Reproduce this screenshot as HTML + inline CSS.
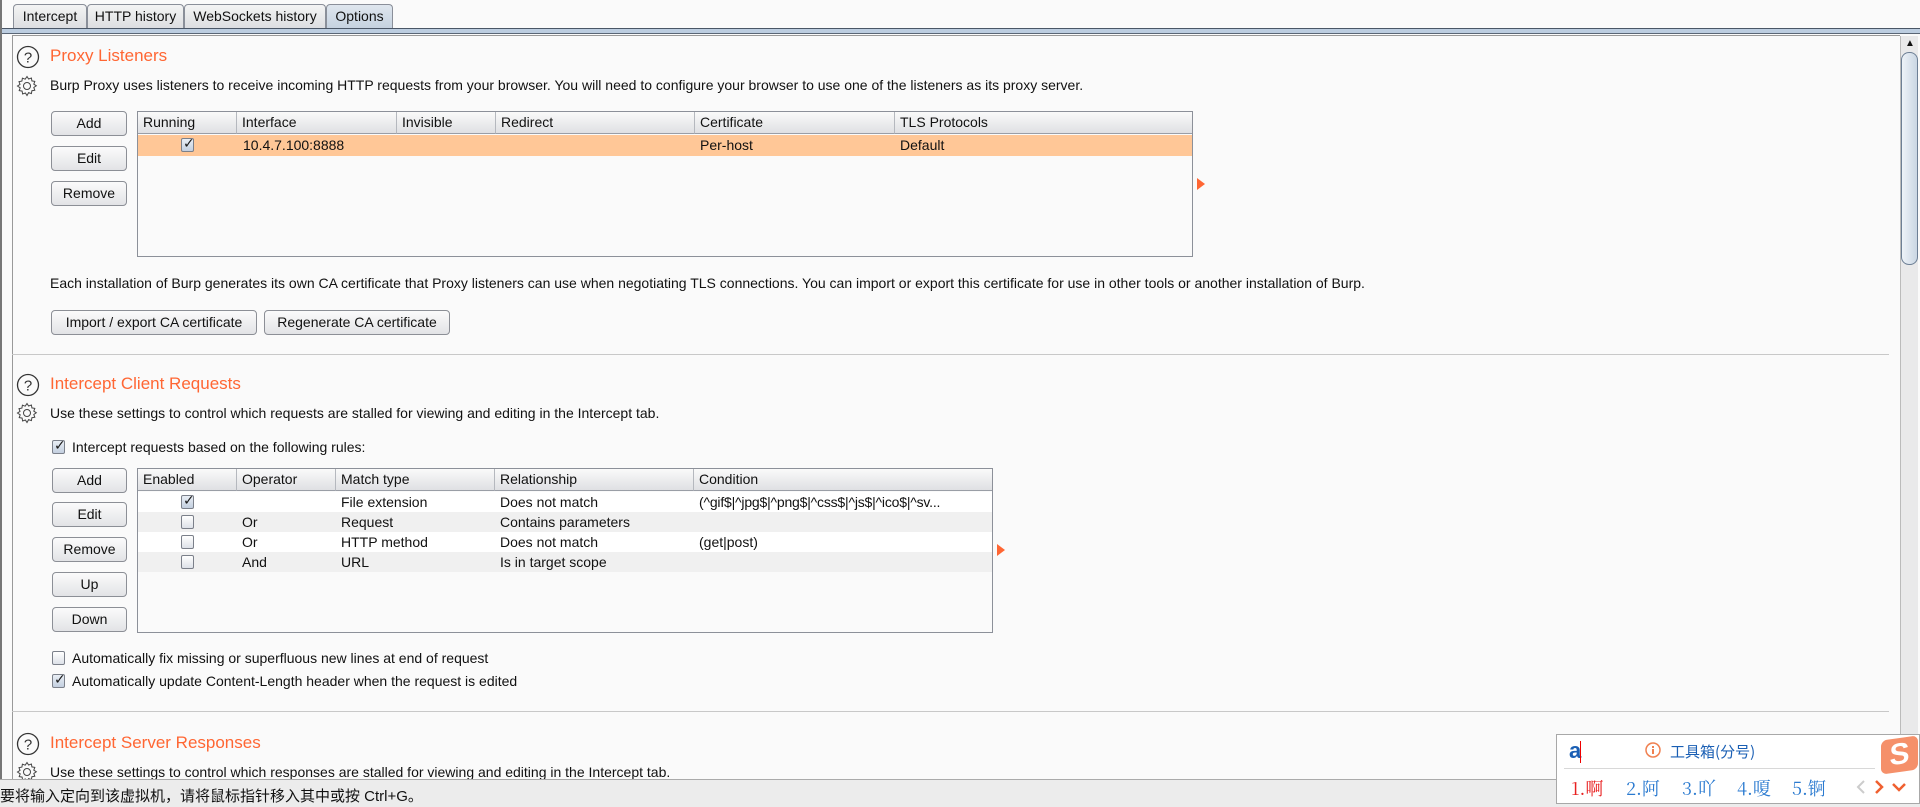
<!DOCTYPE html>
<html><head><meta charset="utf-8"><style>
*{margin:0;padding:0;box-sizing:border-box}
body{width:1920px;height:807px;overflow:hidden;background:#fafafa;font-family:"Liberation Sans","DejaVu Sans","Noto Sans CJK SC",sans-serif;font-size:14px;color:#111;position:relative}
.a{position:absolute;white-space:nowrap}
.tab{position:absolute;top:4px;height:25px;border:1px solid #8a8f99;border-bottom:none;border-radius:4px 4px 0 0;background:linear-gradient(#f4f4f4,#dcdde0);line-height:23px;text-align:center;font-size:14px}
.btn{position:absolute;height:25px;border:1px solid #8c8f96;border-radius:4px;background:linear-gradient(#fbfbfb,#e2e3e6);text-align:center;line-height:23px;font-size:14px}
.h{position:absolute;color:#ff6633;font-size:17px}
.tbl{position:absolute;border:1px solid #8c9099;background:#fafafa}
.th{position:absolute;top:0;height:22px;border-right:1px solid #b5b8be;border-bottom:1px solid #9a9ea6;background:linear-gradient(#fafafa,#dfe0e3);line-height:21px;padding-left:5px}
.cb{position:absolute;width:13px;height:14px;border:1px solid #7b808a;border-radius:2px;background:linear-gradient(#fff,#dde1e8)}
.cb.on{background:linear-gradient(#e9eef5,#c3cfdf)}
.cb.on::after{content:"✓";position:absolute;left:1px;top:-4px;font-size:14px;font-weight:bold;color:#1a1a1a}
.sep{position:absolute;left:12px;width:1877px;height:1px;background:#c8c8c8}
</style></head><body>
<div class="a" style="left:0;top:0;width:2px;height:780px;background:#777"></div>
<div class="tab" style="left:13px;width:74px">Intercept</div>
<div class="tab" style="left:87px;width:97px">HTTP history</div>
<div class="tab" style="left:184px;width:142px">WebSockets history</div>
<div class="tab" style="left:326px;width:67px;background:linear-gradient(#dfe6ee,#c4d1df)">Options</div>
<div class="a" style="left:2px;top:28px;width:1918px;height:1px;background:#4a5666"></div>
<div class="a" style="left:2px;top:29px;width:1918px;height:4px;background:#bccde0"></div>
<div class="a" style="left:2px;top:33px;width:1918px;height:1px;background:#5a6675"></div>
<div class="a" style="left:12px;top:35px;width:1888px;height:745px;border-left:1px solid #999;border-top:1px solid #999;background:#fafafa"></div>
<!-- scrollbar -->
<div class="a" style="left:1900px;top:36px;width:18px;height:744px;background:#e9e9ea;border-left:1px solid #bbb"></div>
<div class="a" style="left:1905px;top:38px;font-size:10px">▲</div>
<div class="a" style="left:1901px;top:52px;width:17px;height:213px;border:1px solid #6d7f95;border-radius:8px;background:linear-gradient(90deg,#eef3f8,#cad6e3)"></div>

<svg class="a" style="left:16px;top:45px" width="24" height="24"><circle cx="12" cy="12" r="10.5" fill="none" stroke="#333" stroke-width="1.3"/><text x="12" y="17.5" text-anchor="middle" font-size="15" font-family="Liberation Sans" fill="#333">?</text></svg>
<div class="h" style="left:50px;top:46px">Proxy Listeners</div>
<svg class="a" style="left:16px;top:75px" width="22" height="22" viewBox="0 0 22 22"><path d="M11 1.5l1.6 2.5 2.8-1 .5 2.9 2.9.5-1 2.8 2.5 1.6-2.5 1.6 1 2.8-2.9.5-.5 2.9-2.8-1L11 20.5l-1.6-2.5-2.8 1-.5-2.9-2.9-.5 1-2.8L1.5 11l2.5-1.6-1-2.8 2.9-.5.5-2.9 2.8 1z" fill="none" stroke="#444" stroke-width="1"/><circle cx="11" cy="11" r="3.5" fill="none" stroke="#444"/></svg>
<div class="a" style="left:50px;top:77px">Burp Proxy uses listeners to receive incoming HTTP requests from your browser. You will need to configure your browser to use one of the listeners as its proxy server.</div>

<div class="btn" style="left:51px;top:111px;width:76px">Add</div>
<div class="btn" style="left:51px;top:146px;width:76px">Edit</div>
<div class="btn" style="left:51px;top:181px;width:76px">Remove</div>
<div class="tbl" style="left:137px;top:111px;width:1056px;height:146px">
<div class="th" style="left:0;width:99px">Running</div>
<div class="th" style="left:99px;width:160px">Interface</div>
<div class="th" style="left:259px;width:99px">Invisible</div>
<div class="th" style="left:358px;width:199px">Redirect</div>
<div class="th" style="left:557px;width:200px">Certificate</div>
<div class="th" style="left:757px;width:297px;border-right:none">TLS Protocols</div>
<div class="a" style="left:0;top:23px;width:1054px;height:21px;background:#ffc797"></div>
<div class="cb on" style="left:43px;top:26px"></div>
<div class="a" style="left:105px;top:25px">10.4.7.100:8888</div>
<div class="a" style="left:562px;top:25px">Per-host</div>
<div class="a" style="left:762px;top:25px">Default</div>
</div>
<svg class="a" style="left:1197px;top:178px" width="8" height="12"><path d="M0 0L8 6L0 12z" fill="#ff6633"/></svg>

<div class="a" style="left:50px;top:275px">Each installation of Burp generates its own CA certificate that Proxy listeners can use when negotiating TLS connections. You can import or export this certificate for use in other tools or another installation of Burp.</div>
<div class="btn" style="left:51px;top:310px;width:206px">Import / export CA certificate</div>
<div class="btn" style="left:264px;top:310px;width:186px">Regenerate CA certificate</div>
<div class="sep" style="top:354px"></div>

<svg class="a" style="left:16px;top:373px" width="24" height="24"><circle cx="12" cy="12" r="10.5" fill="none" stroke="#333" stroke-width="1.3"/><text x="12" y="17.5" text-anchor="middle" font-size="15" font-family="Liberation Sans" fill="#333">?</text></svg>
<div class="h" style="left:50px;top:374px">Intercept Client Requests</div>
<svg class="a" style="left:16px;top:402px" width="22" height="22" viewBox="0 0 22 22"><path d="M11 1.5l1.6 2.5 2.8-1 .5 2.9 2.9.5-1 2.8 2.5 1.6-2.5 1.6 1 2.8-2.9.5-.5 2.9-2.8-1L11 20.5l-1.6-2.5-2.8 1-.5-2.9-2.9-.5 1-2.8L1.5 11l2.5-1.6-1-2.8 2.9-.5.5-2.9 2.8 1z" fill="none" stroke="#444" stroke-width="1"/><circle cx="11" cy="11" r="3.5" fill="none" stroke="#444"/></svg>
<div class="a" style="left:50px;top:405px">Use these settings to control which requests are stalled for viewing and editing in the Intercept tab.</div>
<div class="cb on" style="left:52px;top:440px"></div>
<div class="a" style="left:72px;top:439px">Intercept requests based on the following rules:</div>

<div class="btn" style="left:52px;top:468px;width:75px">Add</div>
<div class="btn" style="left:52px;top:502px;width:75px">Edit</div>
<div class="btn" style="left:52px;top:537px;width:75px">Remove</div>
<div class="btn" style="left:52px;top:572px;width:75px">Up</div>
<div class="btn" style="left:52px;top:607px;width:75px">Down</div>
<div class="tbl" style="left:137px;top:468px;width:856px;height:165px">
<div class="th" style="left:0;width:99px">Enabled</div>
<div class="th" style="left:99px;width:99px">Operator</div>
<div class="th" style="left:198px;width:159px">Match type</div>
<div class="th" style="left:357px;width:199px">Relationship</div>
<div class="th" style="left:556px;width:298px;border-right:none">Condition</div>
<div class="a" style="left:0;top:23px;width:854px;height:20px;background:#fff"></div>
<div class="a" style="left:0;top:43px;width:854px;height:20px;background:#f0f0f0"></div>
<div class="a" style="left:0;top:63px;width:854px;height:20px;background:#fff"></div>
<div class="a" style="left:0;top:83px;width:854px;height:20px;background:#f0f0f0"></div>
<div class="cb on" style="left:43px;top:26px"></div>
<div class="cb" style="left:43px;top:46px"></div>
<div class="cb" style="left:43px;top:66px"></div>
<div class="cb" style="left:43px;top:86px"></div>
<div class="a" style="left:203px;top:25px">File extension</div><div class="a" style="left:362px;top:25px">Does not match</div><div class="a" style="left:561px;top:25px;letter-spacing:-0.2px">(^gif$|^jpg$|^png$|^css$|^js$|^ico$|^sv...</div>
<div class="a" style="left:104px;top:45px">Or</div><div class="a" style="left:203px;top:45px">Request</div><div class="a" style="left:362px;top:45px">Contains parameters</div>
<div class="a" style="left:104px;top:65px">Or</div><div class="a" style="left:203px;top:65px">HTTP method</div><div class="a" style="left:362px;top:65px">Does not match</div><div class="a" style="left:561px;top:65px">(get|post)</div>
<div class="a" style="left:104px;top:85px">And</div><div class="a" style="left:203px;top:85px">URL</div><div class="a" style="left:362px;top:85px">Is in target scope</div>
</div>
<svg class="a" style="left:997px;top:544px" width="8" height="12"><path d="M0 0L8 6L0 12z" fill="#ff6633"/></svg>

<div class="cb" style="left:52px;top:651px"></div>
<div class="a" style="left:72px;top:650px">Automatically fix missing or superfluous new lines at end of request</div>
<div class="cb on" style="left:52px;top:674px"></div>
<div class="a" style="left:72px;top:673px">Automatically update Content-Length header when the request is edited</div>
<div class="sep" style="top:711px"></div>

<svg class="a" style="left:16px;top:732px" width="24" height="24"><circle cx="12" cy="12" r="10.5" fill="none" stroke="#333" stroke-width="1.3"/><text x="12" y="17.5" text-anchor="middle" font-size="15" font-family="Liberation Sans" fill="#333">?</text></svg>
<div class="h" style="left:50px;top:733px">Intercept Server Responses</div>
<svg class="a" style="left:16px;top:761px" width="22" height="22" viewBox="0 0 22 22"><path d="M11 1.5l1.6 2.5 2.8-1 .5 2.9 2.9.5-1 2.8 2.5 1.6-2.5 1.6 1 2.8-2.9.5-.5 2.9-2.8-1L11 20.5l-1.6-2.5-2.8 1-.5-2.9-2.9-.5 1-2.8L1.5 11l2.5-1.6-1-2.8 2.9-.5.5-2.9 2.8 1z" fill="none" stroke="#444" stroke-width="1"/><circle cx="11" cy="11" r="3.5" fill="none" stroke="#444"/></svg>
<div class="a" style="left:50px;top:764px">Use these settings to control which responses are stalled for viewing and editing in the Intercept tab.</div>

<!-- status bar -->
<div class="a" style="left:0;top:779px;width:1920px;height:28px;background:#ececec;border-top:1px solid #aaa"></div>
<div class="a" style="left:0;top:785px;font-size:15px;font-family:'Liberation Sans','Noto Sans CJK SC',sans-serif">要将输入定向到该虚拟机，请将鼠标指针移入其中或按 Ctrl+G。</div>

<!-- IME -->
<div class="a" style="left:1556px;top:734px;width:364px;height:70px;background:#fff;border:1px solid #a8a8a8"></div>
<div class="a" style="left:1564px;top:768px;width:311px;height:1px;background:#d8d8d8"></div>
<div class="a" style="left:1569px;top:738px;font-size:22px;font-weight:bold;color:#1a5fb4">a</div>
<div class="a" style="left:1580px;top:741px;width:1px;height:22px;background:#e00"></div>
<svg class="a" style="left:1645px;top:742px" width="16" height="16"><circle cx="8" cy="8" r="7" fill="none" stroke="#f08050" stroke-width="1.5"/><rect x="7" y="7" width="2" height="5" fill="#f08050"/><rect x="7" y="4" width="2" height="2" fill="#f08050"/></svg>
<div class="a" style="left:1670px;top:741px;font-size:15px;color:#1a5fb4;font-family:'Noto Sans CJK SC',sans-serif">工具箱(分号)</div>
<div class="a" style="left:1881px;top:738px;width:37px;height:34px;background:#f5906a;border-radius:6px;color:#fff;font-weight:bold;font-size:30px;line-height:34px;text-align:center;transform:skewY(-8deg)">S</div>
<div class="a" style="left:1571px;top:775px;font-size:18px;color:#e82020;font-family:'Noto Serif CJK SC',serif">1.啊</div>
<div class="a" style="left:1626px;top:775px;font-size:18px;color:#2a7ad0;font-family:'Noto Serif CJK SC',serif">2.阿</div>
<div class="a" style="left:1682px;top:775px;font-size:18px;color:#2a7ad0;font-family:'Noto Serif CJK SC',serif">3.吖</div>
<div class="a" style="left:1737px;top:775px;font-size:18px;color:#2a7ad0;font-family:'Noto Serif CJK SC',serif">4.嗄</div>
<div class="a" style="left:1792px;top:775px;font-size:18px;color:#2a7ad0;font-family:'Noto Serif CJK SC',serif">5.锕</div>
<svg class="a" style="left:1855px;top:779px" width="60" height="16"><path d="M9 2L3 8l6 6" fill="none" stroke="#ccc" stroke-width="2"/><path d="M21 2l6 6-6 6" fill="none" stroke="#f06030" stroke-width="2.5"/><path d="M38 5l6 6 6-6" fill="none" stroke="#f06030" stroke-width="2.5"/></svg>
</body></html>
